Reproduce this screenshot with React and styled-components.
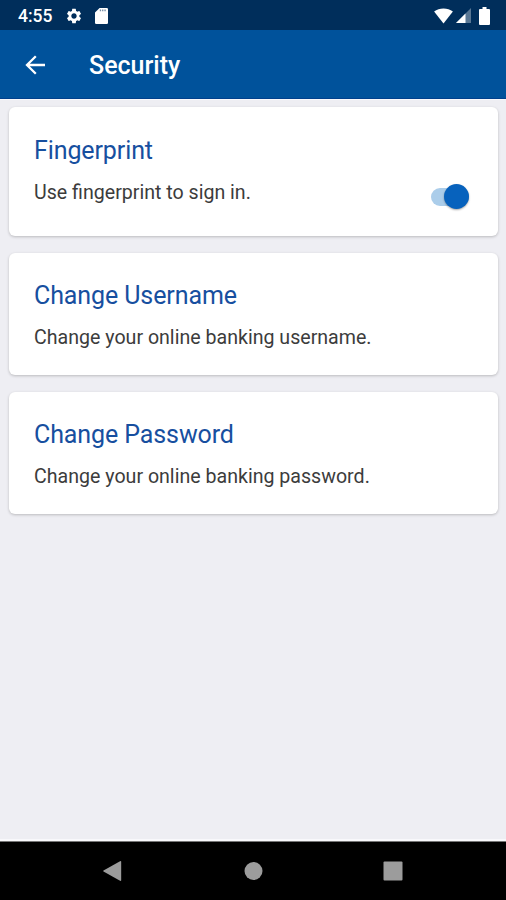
import React, { useState } from 'react';
import styled, { createGlobalStyle } from 'styled-components';
import { MdSettings } from 'react-icons/md';

const GlobalStyle = createGlobalStyle`
  * {
    box-sizing: border-box;
  }
  body {
    margin: 0;
    font-family: Roboto, sans-serif;
  }
`;

const Screen = styled.div`
  display: flex;
  flex-direction: column;
  width: 506px;
  height: 900px;
  overflow: hidden;
  background: #eeeef3;
`;

// Android status bar
const StatusBar = styled.div`
  display: flex;
  align-items: center;
  height: 30px;
  padding: 1px 16.5px 0 18px;
  background: #002e5b;
  color: #fff;

  svg {
    display: block;
  }
`;

const Clock = styled.span`
  width: 47px;
  padding-top: 1px;
  font-size: 17.5px;
  font-weight: 500;
  line-height: 28px;
`;

const StatusIcons = styled.div`
  display: flex;
  align-items: center;
  gap: ${(props) => props.$gap}px;
  margin-left: ${(props) => (props.$end ? 'auto' : '0')};
`;

const AppBar = styled.header`
  display: flex;
  align-items: center;
  height: 69px;
  padding: 1px 25px 0;
  background: #00529b;
  border-bottom: 1px solid #00408c;
  color: #fff;
`;

const BackButton = styled.button`
  display: flex;
  width: 64px;
  padding: 0;
  border: 0;
  background: none;
  color: inherit;
`;

const AppTitle = styled.h1`
  margin: 0;
  padding-top: 3px;
  font-size: 25px;
  font-weight: 500;
  line-height: 30px;
`;

const Content = styled.main`
  display: flex;
  flex: 1;
  flex-direction: column;
  gap: 17px;
  padding: 7px 8px 0 9px;
  border-top: 1px solid #f8f8fb;
  border-bottom: 2px solid #f8f8fb;
`;

const Card = styled.section`
  display: flex;
  justify-content: space-between;
  height: ${(props) => (props.$tall ? 129 : 122)}px;
  padding: ${(props) => (props.$tall ? 27 : 26)}px 29px 0 25px;
  border-radius: 6px;
  background: #fff;
  box-shadow: 0 1px 3px rgba(0, 0, 0, 0.22);
`;

const CardTitle = styled.h2`
  margin: 0 0 12px;
  color: #174f9f;
  font-size: 25px;
  font-weight: 400;
  line-height: 34px;
  letter-spacing: -0.1px;
`;

const CardText = styled.p`
  margin: 0;
  color: #3c3c3c;
  font-size: 19.6px;
  font-weight: 400;
  line-height: 26px;
`;

const Toggle = styled.button`
  display: flex;
  align-items: center;
  justify-content: ${(props) => (props.$on ? 'flex-end' : 'flex-start')};
  width: 38px;
  height: 18px;
  margin-top: 53.5px;
  padding: 0;
  border: 0;
  border-radius: 9px;
  background: ${(props) => (props.$on ? '#abcdea' : '#c4c4c4')};
`;

const Thumb = styled.span`
  flex: none;
  width: 25px;
  height: 25px;
  border-radius: 50%;
  background: ${(props) => (props.$on ? '#0762bd' : '#fafafa')};
  box-shadow: 0 1px 2px rgba(0, 0, 0, 0.35);
`;

const NavBar = styled.nav`
  display: flex;
  justify-content: space-between;
  height: 59px;
  padding: 19px 103px 0 102px;
  border-top: 1px solid #777;
  background: #000;
`;

const SdCardIcon = () => (
  <svg width="13" height="16" viewBox="0 0 13 16" fill="currentColor">
    <path d="M4.6 0h7.1A1.3 1.3 0 0 1 13 1.3v13.4a1.3 1.3 0 0 1-1.3 1.3H1.3A1.3 1.3 0 0 1 0 14.7V4.6z" />
    <path d="M4.8 1.6h1.3v1.7H4.8zm2.3 0h1.3v1.7H7.1zm2.3 0h1.3v1.7H9.4z" fill="#7189a2" />
  </svg>
);

const WifiIcon = () => (
  <svg width="19" height="16" viewBox="0 0 19 16" fill="currentColor">
    <path d="M9.5 15.5.1 3.6C2.8 1.5 6 .6 9.5 .6s6.7.9 9.4 3z" />
  </svg>
);

const SignalIcon = () => (
  <svg width="15" height="15" viewBox="0 0 15 15" fill="currentColor">
    <path d="M0 15 15 0v15z" opacity="0.35" />
    <path d="M0 15 9.5 5.5V15z" />
  </svg>
);

const BatteryIcon = () => (
  <svg width="11" height="18" viewBox="0 0 11 18" fill="currentColor">
    <path d="M3.5 0h4v2H10a1 1 0 0 1 1 1v14a1 1 0 0 1-1 1H1a1 1 0 0 1-1-1V3a1 1 0 0 1 1-1h2.5z" />
  </svg>
);

const BackArrowIcon = () => (
  <svg width="20" height="20" viewBox="0 0 20 20" fill="none" stroke="currentColor" strokeWidth="2.3">
    <path d="M10.8 1.2 2 10l8.8 8.8M2 10h18" />
  </svg>
);

const items = [
  {
    title: 'Fingerprint',
    text: 'Use fingerprint to sign in.',
    toggle: true,
  },
  {
    title: 'Change Username',
    text: 'Change your online banking username.',
  },
  {
    title: 'Change Password',
    text: 'Change your online banking password.',
  },
];

const App = () => {
  const [enabled, setEnabled] = useState(true);

  return (
    <Screen>
      <GlobalStyle />
      <StatusBar>
        <Clock>4:55</Clock>
        <StatusIcons $gap={12}>
          <MdSettings size={18} />
          <SdCardIcon />
        </StatusIcons>
        <StatusIcons $gap={8} $end>
          <StatusIcons $gap={3}>
            <WifiIcon />
            <SignalIcon />
          </StatusIcons>
          <BatteryIcon />
        </StatusIcons>
      </StatusBar>
      <AppBar>
        <BackButton aria-label="Back">
          <BackArrowIcon />
        </BackButton>
        <AppTitle>Security</AppTitle>
      </AppBar>
      <Content>
        {items.map((item) => (
          <Card key={item.title} $tall={item.toggle}>
            <div>
              <CardTitle>{item.title}</CardTitle>
              <CardText>{item.text}</CardText>
            </div>
            {item.toggle && (
              <Toggle $on={enabled} aria-label={item.title} onClick={() => setEnabled(!enabled)}>
                <Thumb $on={enabled} />
              </Toggle>
            )}
          </Card>
        ))}
      </Content>
      <NavBar>
        <svg width="20" height="20" viewBox="0 0 20 20" fill="#9c9c9c">
          <path d="M18.5 0q.7 0 .7.7v18.6q0 .7-.7.7L1.5 10.6q-.7-.6 0-1.2z" />
        </svg>
        <svg width="20" height="20" viewBox="0 0 20 20" fill="#9c9c9c">
          <circle cx="10.5" cy="10" r="9" />
        </svg>
        <svg width="20" height="20" viewBox="0 0 20 20" fill="#9c9c9c">
          <rect x=".5" y=".5" width="19" height="19" rx="1" />
        </svg>
      </NavBar>
    </Screen>
  );
};

export default App;
